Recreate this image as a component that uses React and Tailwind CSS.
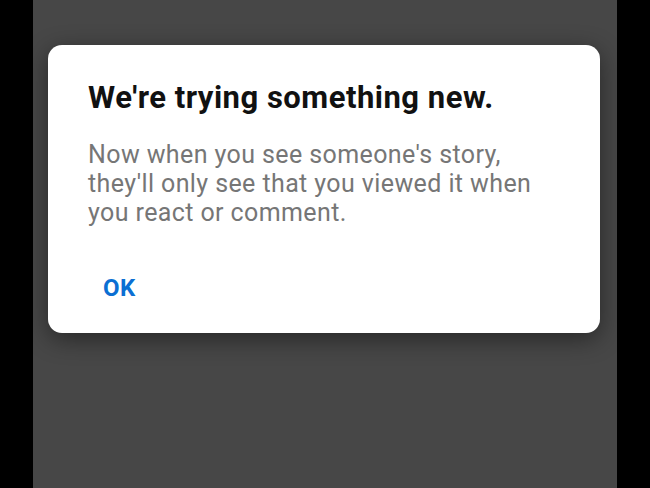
export default function App() {
  return (
    <div className="w-[650px] h-[488px] bg-black flex justify-center overflow-hidden" style={{ fontFamily: "Roboto, 'Noto Sans', sans-serif" }}>
      <div className="w-[584px] h-full bg-[#474747] pt-[45px] pl-[15px]">
        <div className="w-[552px] h-[288px] bg-white rounded-[14px] shadow-[0_6px_24px_rgba(0,0,0,0.45)] pl-[40px] pt-[33px]">
          <div className="text-[31px] font-bold text-[#111] leading-[40px] tracking-[0.5px]">We're trying something new.</div>
          <div className="text-[25px] leading-[29px] text-[#767676] mt-[22px] tracking-[0.4px]">
            Now when you see someone's story,<br />
            they'll only see that you viewed it when<br />
            you react or comment.
          </div>
          <div className="mt-[46px] ml-[15px] text-[24px] font-bold text-[#0b6fd3] leading-[30px] tracking-[0.5px]">OK</div>
        </div>
      </div>
    </div>
  );
}
